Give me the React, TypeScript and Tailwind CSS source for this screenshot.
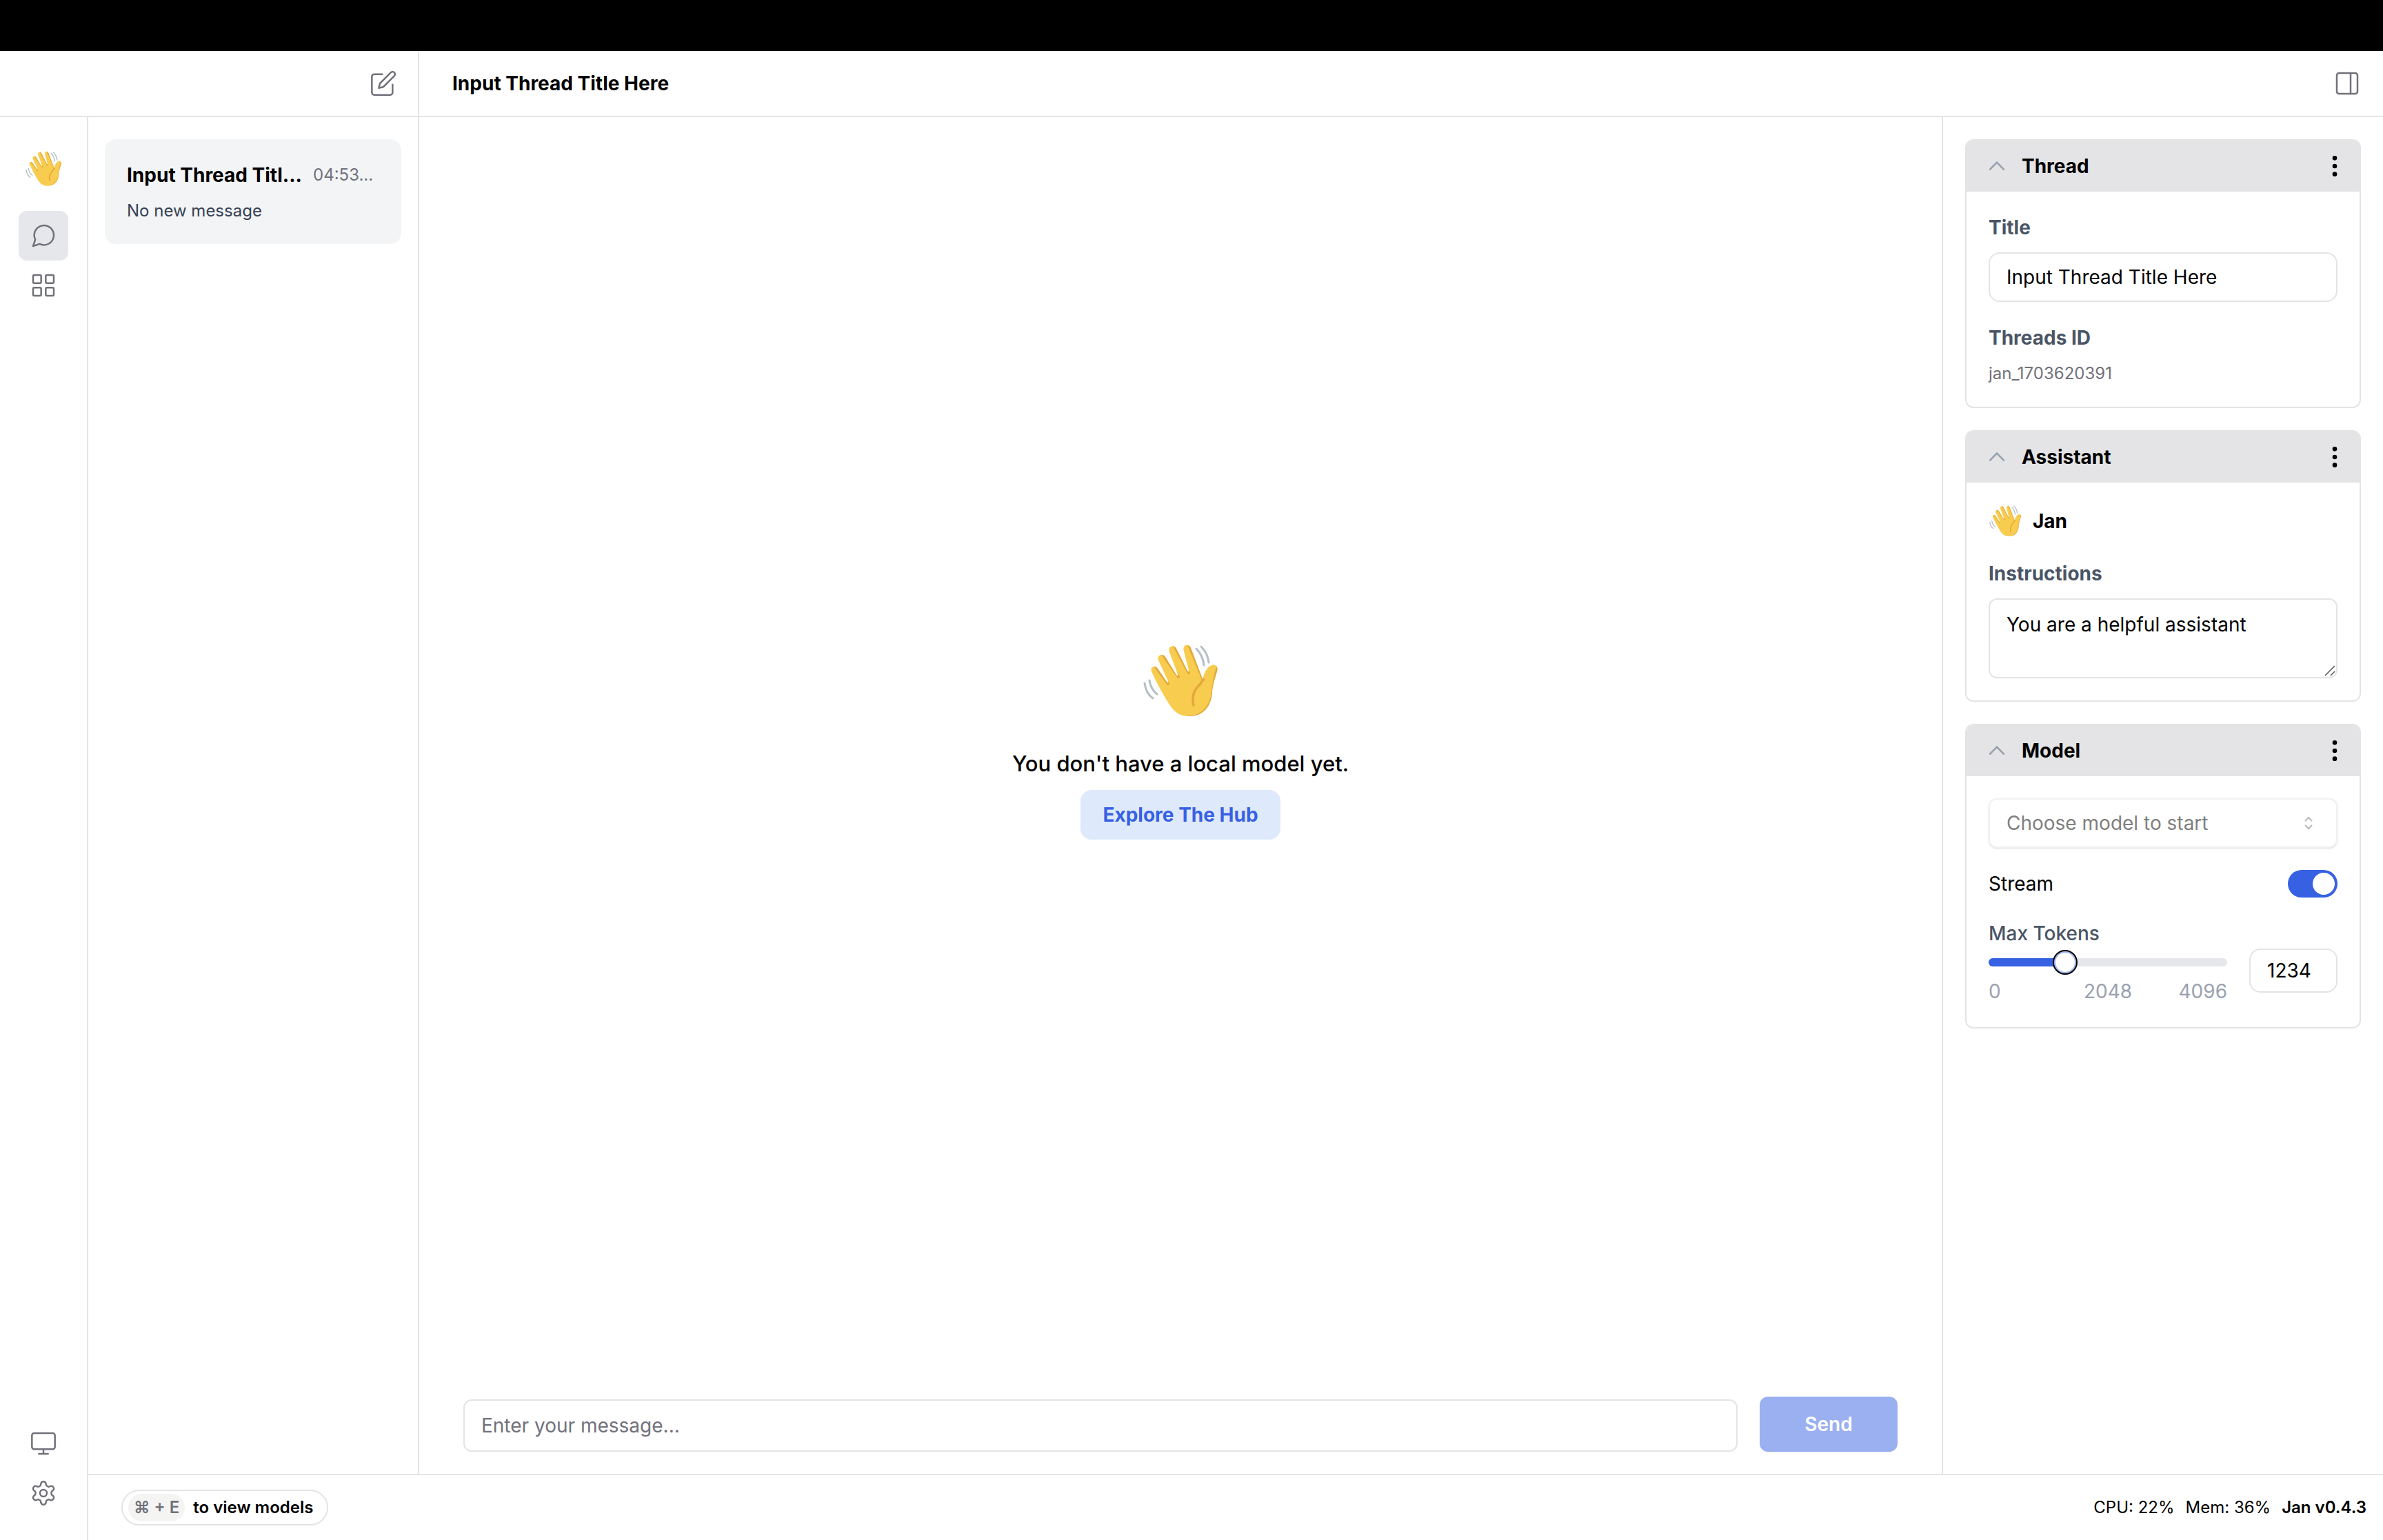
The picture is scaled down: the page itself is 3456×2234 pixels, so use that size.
import { useId, useState, type ReactNode } from "react";
import { LayoutGrid, Monitor, PanelRight, MoreVertical } from "lucide-react";

function Wave({ className }: { className: string }) {
  const id = useId();
  return (
    <svg viewBox="0 0 112 112" className={className} role="img" aria-label="Waving hand" fill="none">
      <defs>
        <clipPath id={id}>
          <path d="M14 42C11 36 19 32 23 38L36 57C37 59 39 58 38 56L24 26C21 19 30 15 34 21L50 47C51 49 53 48 52 46L40 14C37 5 47 2 50 9L66 41C67 43 69 42 68 40L61 13C58 3 68 1 71 8L88 53C91 56 88 54 90 47C92 41 96 35 101 33C107 31 111 35 109 42C107 49 103 60 102 71C101 94 88 107 69 107C55 107 47 101 40 90C34 81 22 60 14 42Z" />
        </clipPath>
      </defs>
      <path
        d="M14 42C11 36 19 32 23 38L36 57C37 59 39 58 38 56L24 26C21 19 30 15 34 21L50 47C51 49 53 48 52 46L40 14C37 5 47 2 50 9L66 41C67 43 69 42 68 40L61 13C58 3 68 1 71 8L88 53C91 56 88 54 90 47C92 41 96 35 101 33C107 31 111 35 109 42C107 49 103 60 102 71C101 94 88 107 69 107C55 107 47 101 40 90C34 81 22 60 14 42Z"
        fill="#f8cc4e"
      />
      <g clipPath={`url(#${id})`} stroke="#e3a83c" strokeWidth="4" strokeLinecap="round">
        <path d="M19 34L38 60M30 17L53 50M47 5L68 44M68 3L89 54" />
        <path d="M110 36C106 49 104 60 103 71C101 96 84 109 68 108" />
      </g>
      <path d="M88 54C87 62 74 65 74 82C74 86 74 88 75 91" stroke="#e3a83c" strokeWidth="3.5" strokeLinecap="round" />
      <path d="M79 9C85 15 89 23 90 33M86 6C92 12 96 20 97 29M11 55C12 63 16 70 22 75M4 59C5 67 9 76 16 81" stroke="#b3c0c6" strokeWidth="3" strokeLinecap="round" />
    </svg>
  );
}

function Card({ title, children }: { title: string; children: ReactNode }) {
  return (
    <section className="overflow-hidden rounded-xl border-2 border-[#e4e4e4]">
      <header className="flex h-[74px] items-center justify-between bg-[#e4e4e6] pr-4 pl-7">
        <div className="flex items-center gap-5">
          <button type="button" aria-label={`Collapse ${title}`} className="text-gray-400">
            <svg viewBox="0 0 24 24" className="size-8" fill="none" stroke="currentColor" strokeWidth="2">
              <path d="m4 16 8-8 8 8" />
            </svg>
          </button>
          <h2 className="font-bold">{title}</h2>
        </div>
        <button type="button" aria-label={`${title} options`}>
          <MoreVertical className="size-10" />
        </button>
      </header>
      <div className="flex flex-col gap-8 py-8 pr-8 pl-8">{children}</div>
    </section>
  );
}

const field = "w-full rounded-2xl border-2 border-[#e4e4e4] bg-white px-6";
const ribbonButton = "flex size-18 items-center justify-center rounded-xl text-zinc-500";

export default function App() {
  const [title, setTitle] = useState("Input Thread Title Here");
  const [instructions, setInstructions] = useState("You are a helpful assistant");
  const [message, setMessage] = useState("");
  const [stream, setStream] = useState(true);
  const [tokens, setTokens] = useState(1234);
  const ratio = tokens / 4096;

  return (
    <div className="flex h-screen flex-col bg-white font-[Inter,sans-serif] text-[28px] leading-10 text-black">
      <div className="h-[74px] shrink-0 bg-black" />

      <header className="flex h-24 shrink-0 border-b-2 border-[#e4e4e4]">
        <div className="flex w-[608px] shrink-0 items-center justify-end border-r-2 border-[#e4e4e4] pr-[30px]">
          <button type="button" aria-label="New thread" className="text-zinc-500">
            <svg viewBox="0 0 24 24" className="size-10" fill="none" stroke="currentColor" strokeWidth="1.5" strokeLinecap="round" strokeLinejoin="round">
              <path d="M11 4H4a2 2 0 0 0-2 2v14a2 2 0 0 0 2 2h14a2 2 0 0 0 2-2v-7" />
              <path d="M18.5 2.5a2.121 2.121 0 0 1 3 3L12 15l-4 1 1-4Z" />
            </svg>
          </button>
        </div>
        <div className="flex flex-1 items-center justify-between pr-8 pl-12">
          <h1 className="font-bold">{title}</h1>
          <button type="button" aria-label="Toggle side panel" className="text-zinc-500">
            <PanelRight className="size-10" strokeWidth={1.5} />
          </button>
        </div>
      </header>

      <div className="flex min-h-0 flex-1">
        <nav className="flex w-32 shrink-0 flex-col items-center justify-between border-r-2 border-[#e4e4e4] pt-12 pb-8">
          <div className="flex flex-col items-center">
            <Wave className="mb-[34px] size-[54px]" />
            <button type="button" aria-label="Threads" className={`${ribbonButton} bg-gray-200`}>
              <svg viewBox="0 0 24 24" className="size-10" fill="none" stroke="currentColor" strokeWidth="1.5" strokeLinecap="round" strokeLinejoin="round">
                <path d="m3 21 1.9-5.7a8.5 8.5 0 1 1 3.8 3.8z" />
              </svg>
            </button>
            <button type="button" aria-label="Hub" className={ribbonButton}>
              <LayoutGrid className="size-10" strokeWidth={1.5} />
            </button>
          </div>
          <div className="flex flex-col">
            <button type="button" aria-label="System monitor" className={ribbonButton}>
              <Monitor className="size-10" strokeWidth={1.5} />
            </button>
            <button type="button" aria-label="Settings" className={ribbonButton}>
              <svg viewBox="0 0 24 24" className="size-10" fill="none" stroke="currentColor" strokeWidth="1.5" strokeLinecap="round" strokeLinejoin="round">
                <path d="M12.22 2h-.44a2 2 0 0 0-2 2v.18a2 2 0 0 1-1 1.73l-.43.25a2 2 0 0 1-2 0l-.15-.08a2 2 0 0 0-2.73.73l-.22.38a2 2 0 0 0 .73 2.73l.15.1a2 2 0 0 1 1 1.72v.51a2 2 0 0 1-1 1.74l-.15.09a2 2 0 0 0-.73 2.73l.22.38a2 2 0 0 0 2.73.73l.15-.08a2 2 0 0 1 2 0l.43.25a2 2 0 0 1 1 1.73V20a2 2 0 0 0 2 2h.44a2 2 0 0 0 2-2v-.18a2 2 0 0 1 1-1.73l.43-.25a2 2 0 0 1 2 0l.15.08a2 2 0 0 0 2.73-.73l.22-.39a2 2 0 0 0-.73-2.73l-.15-.08a2 2 0 0 1-1-1.74v-.5a2 2 0 0 1 1-1.74l.15-.09a2 2 0 0 0 .73-2.73l-.22-.38a2 2 0 0 0-2.73-.73l-.15.08a2 2 0 0 1-2 0l-.43-.25a2 2 0 0 1-1-1.73V4a2 2 0 0 0-2-2z" />
                <circle cx="12" cy="12" r="3" />
              </svg>
            </button>
          </div>
        </nav>

        <div className="flex min-w-0 flex-1 flex-col">
          <div className="flex min-h-0 flex-1">
            <aside className="w-[480px] shrink-0 border-r-2 border-[#e4e4e4] px-6 pt-8">
              <button type="button" className="flex w-full flex-col gap-4 rounded-2xl bg-gray-100 p-8 text-left">
                <span className="flex w-full items-center justify-between">
                  <span className="font-bold">Input Thread Titl...</span>
                  <span className="w-24 text-2xl leading-10 text-zinc-500">04:53...</span>
                </span>
                <span className="text-2xl text-gray-700">No new message</span>
              </button>
            </aside>

            <main className="flex min-w-0 flex-1 flex-col">
              <div className="flex flex-1 flex-col items-center justify-center">
                <Wave className="size-28" />
                <p className="mt-10 text-[31px] leading-12 font-medium">You don't have a local model yet.</p>
                <button type="button" className="mt-[14px] h-18 rounded-2xl bg-[#dfe9fc] px-8 font-bold text-[#3761e3]">
                  Explore The Hub
                </button>
              </div>
              <form className="flex items-end gap-8 px-16 pt-[46px] pb-8" onSubmit={(e) => e.preventDefault()}>
                <input
                  aria-label="Message"
                  placeholder="Enter your message..."
                  value={message}
                  onChange={(e) => setMessage(e.target.value)}
                  className="h-[76px] min-w-0 flex-1 rounded-xl border-2 border-[#e4e4e4] px-6 placeholder:text-zinc-500"
                />
                <button type="submit" className="h-20 w-[200px] rounded-xl bg-[#9bb0f1] font-semibold text-white">
                  Send
                </button>
              </form>
            </main>

            <aside className="flex w-[640px] shrink-0 flex-col gap-8 border-l-2 border-[#e4e4e4] p-8">
              <Card title="Thread">
                <div className="flex flex-col gap-4">
                  <label htmlFor="title" className="font-bold text-gray-600">Title</label>
                  <input id="title" value={title} onChange={(e) => setTitle(e.target.value)} className={`${field} h-18`} />
                </div>
                <div className="flex flex-col gap-4">
                  <h3 className="font-bold text-gray-600">Threads ID</h3>
                  <p className="text-2xl text-zinc-500">jan_1703620391</p>
                </div>
              </Card>

              <Card title="Assistant">
                <div className="flex items-center gap-4">
                  <Wave className="size-12" />
                  <h3 className="font-bold">Jan</h3>
                </div>
                <div className="flex flex-col gap-4">
                  <label htmlFor="instructions" className="font-bold text-gray-600">Instructions</label>
                  <div className="relative">
                    <textarea
                      id="instructions"
                      value={instructions}
                      onChange={(e) => setInstructions(e.target.value)}
                      className="block h-[116px] w-full resize-none rounded-xl border-2 border-[#e4e4e4] px-6 py-4"
                    />
                    <svg viewBox="0 0 16 16" className="pointer-events-none absolute right-[3px] bottom-[3px] size-4" fill="none" stroke="#555" strokeWidth="1.5">
                      <path d="M1 15 15 1M9 15l6-6" />
                    </svg>
                  </div>
                </div>
              </Card>

              <Card title="Model">
                <div className="relative">
                  <select aria-label="Model" className="h-18 w-full appearance-none rounded-xl border-2 border-[#f1f1f1] bg-white px-6 text-[#808080] shadow-sm">
                    <option>Choose model to start</option>
                  </select>
                  <svg viewBox="0 0 12 20" className="pointer-events-none absolute top-[26px] right-9 h-5 w-3" fill="none" stroke="#b8b8b8" strokeWidth="2">
                    <path d="M1 7l5-5 5 5M1 13l5 5 5-5" />
                  </svg>
                </div>
                <label className="flex items-center justify-between">
                  Stream
                  <input
                    type="checkbox"
                    role="switch"
                    checked={stream}
                    onChange={(e) => setStream(e.target.checked)}
                    className="flex h-10 w-18 appearance-none items-center rounded-full bg-gray-300 p-1 before:size-8 before:rounded-full before:bg-white checked:justify-end checked:bg-[#3761e3]"
                  />
                </label>
                <div>
                  <label htmlFor="tokens" className="font-medium text-gray-600">Max Tokens</label>
                  <div className="flex items-start gap-8">
                    <div className="flex-1 pt-1">
                      <div className="relative flex h-9 items-center">
                        <div className="h-3 w-full overflow-hidden rounded-full bg-gray-200">
                          <div className="h-full bg-[#3761e3]" style={{ width: `${ratio * 100}%` }} />
                        </div>
                        <input
                          id="tokens"
                          type="range"
                          min={0}
                          max={4096}
                          value={tokens}
                          onChange={(e) => setTokens(Number(e.target.value))}
                          className="absolute inset-0 h-9 w-full appearance-none bg-transparent [&::-webkit-slider-thumb]:size-9 [&::-webkit-slider-thumb]:appearance-none [&::-webkit-slider-thumb]:rounded-full [&::-webkit-slider-thumb]:border-2 [&::-webkit-slider-thumb]:border-black [&::-webkit-slider-thumb]:bg-white [&::-webkit-slider-thumb]:shadow-[inset_0_0_0_2px_#9bb0f1]"
                        />
                      </div>
                      <div className="mt-1 grid grid-cols-3 text-gray-400">
                        <span>0</span>
                        <span className="text-center">2048</span>
                        <span className="text-right">4096</span>
                      </div>
                    </div>
                    <input
                      aria-label="Max tokens value"
                      value={tokens}
                      onChange={(e) => setTokens(Number(e.target.value) || 0)}
                      className="mt-[2px] h-16 w-32 rounded-2xl border-2 border-[#e4e4e4] px-6"
                    />
                  </div>
                </div>
              </Card>
            </aside>
          </div>

          <footer className="flex h-24 shrink-0 items-center justify-between border-t-2 border-[#e4e4e4] pr-6 pl-12 text-2xl">
            <button type="button" className="flex h-[52px] items-center gap-3 rounded-full border-2 border-[#e4e4e4] pr-5 pl-2 font-semibold">
              <kbd className="flex h-10 items-center rounded-full bg-[#f4f4f3] px-2 font-[Inter,sans-serif] text-zinc-500">⌘ + E</kbd>
              to view models
            </button>
            <div className="flex gap-4">
              <span>CPU: 22%</span>
              <span>Mem: 36%</span>
              <span className="font-semibold">Jan v0.4.3</span>
            </div>
          </footer>
        </div>
      </div>
    </div>
  );
}
